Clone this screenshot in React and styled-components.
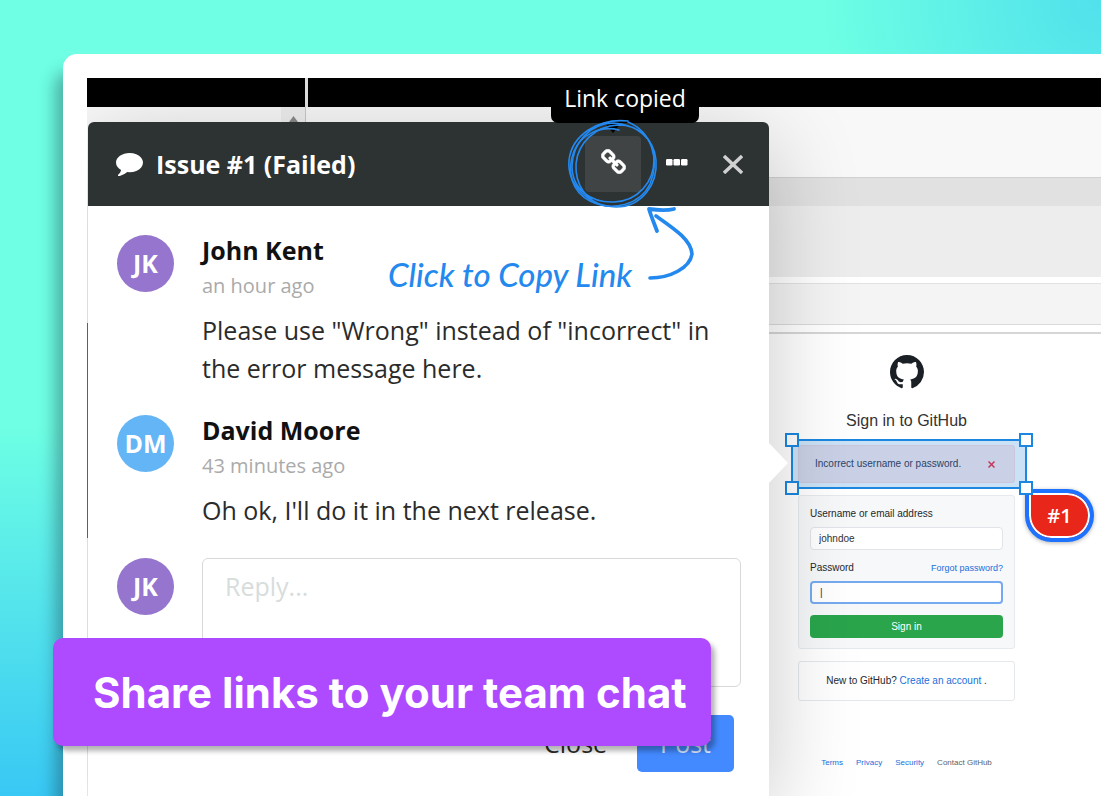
import React from "react";
import styled, { createGlobalStyle } from "styled-components";

const GlobalStyle = createGlobalStyle`
  *, *::before, *::after { box-sizing: border-box; }
  body { margin: 0; font-family: "Open Sans", "Noto Sans", sans-serif; }
  button, input, textarea { font-family: inherit; margin: 0; }
  h1, h2, h3, p { margin: 0; }
`;

const blue = "#2489ee";

const Page = styled.div`
  position: relative;
  display: flex;
  min-height: 100vh;
  padding: 54px 0 0 63px;
  overflow: hidden;
  background:
    radial-gradient(circle at 100% 0, #50e1ec 0, rgba(110, 255, 228, 0) 280px),
    linear-gradient(to top, #38c8f4 0, #6effe4 370px);
`;

const Frame = styled.div`
  flex: 1;
  display: flex;
  min-width: 0;
  padding: 24px 0 0 24px;
  border-radius: 14px 0 0 0;
  background: #fff;
  box-shadow: -8px 18px 16px rgba(20, 50, 60, 0.38);
`;

const Stage = styled.div`
  flex: 1;
  display: grid;
  grid-template-columns: minmax(0, 1fr);
  min-width: 0;
  overflow: hidden;
`;

/* App behind the dialog */

const Backdrop = styled.div`
  grid-area: 1 / 1;
  display: flex;
  flex-direction: column;
  min-width: 0;
`;

const TopBar = styled.div`
  display: flex;
  height: 29px;
  background: #000;
`;

const TopBarCell = styled.div`
  width: 221px;
  border-right: 3px solid #e2e2e2;
`;

const Workspace = styled.div`
  flex: 1;
  display: flex;
`;

const Sidebar = styled.div`
  display: flex;
  justify-content: space-between;
  align-items: flex-start;
  width: 219px;
  border-right: 1px solid #c8c8c8;
  background: #f8f8f8;
`;

const FailStripe = styled.div`
  flex: none;
  width: 2px;
  height: 215px;
  margin-top: 216px;
  background: #f0352b;
`;

const ScrollUp = styled.div`
  display: flex;
  justify-content: center;
  width: 24px;
  height: 24px;
  padding-top: 9px;
  background: #eeeeee;
`;

const Main = styled.div`
  flex: 1;
  min-width: 0;
  background: #fff;
`;

const Band = styled.div`
  height: ${(p) => p.$h}px;
  background: ${(p) => p.$bg};
  border-top: ${(p) => (p.$line ? `1px solid ${p.$line}` : "0")};
`;

const SignIn = styled.div`
  display: flex;
  flex-direction: column;
  align-items: stretch;
  width: 217px;
  margin-left: 492px;
  padding-top: 21px;
  font-family: "Liberation Sans", Arial, sans-serif;
  font-size: 10px;
  line-height: 14px;
  color: #24292e;
`;

const Mark = styled.svg`
  align-self: center;
  width: 34px;
  height: 34px;
  fill: #1b1f26;
`;

const SignInTitle = styled.h2`
  margin: 20px 0 6px;
  font-size: 16px;
  font-weight: 400;
  line-height: 24px;
  text-align: center;
  color: #333;
`;

const Selection = styled.div`
  position: relative;
  margin: 0 -12px 6px -7px;
  padding: 4px 10px 4px 5px;
  border: 2px solid #1b87e0;
  background: #cbe2f6;
`;

const Handle = styled.span`
  position: absolute;
  width: 14px;
  height: 14px;
  border: 2px solid #1b87e0;
  background: #fff;
  ${(p) => p.$v}: -8px;
  ${(p) => p.$h}: -8px;
`;

const Flash = styled.div`
  display: flex;
  align-items: center;
  justify-content: space-between;
  height: 38px;
  padding: 0 19px 0 16px;
  border: 1px solid #c9c6dd;
  border-radius: 3px;
  background: #cad1e6;
  color: #2b4468;
`;

const Pin = styled.div`
  position: absolute;
  top: 48px;
  left: 232px;
  display: flex;
  align-items: center;
  justify-content: center;
  width: 69px;
  height: 53px;
  border: 4px solid #1d72ff;
  border-radius: 4px 27px 27px 27px;
  background: #e8261a;
  box-shadow: inset 0 0 0 2px #fff, 0 1px 4px rgba(0, 0, 0, 0.3);
  font-family: "Open Sans", sans-serif;
  font-size: 20px;
  font-weight: 600;
  color: #fff;
`;

const Form = styled.form`
  display: flex;
  flex-direction: column;
  padding: 11px 11px 10px;
  border: 1px solid #e6eaee;
  border-radius: 3px;
  background: #f6f8fa;
`;

const LabelRow = styled.div`
  display: flex;
  justify-content: space-between;
  align-items: center;
  height: 14px;
  margin-bottom: 6px;
`;

const TextInput = styled.input`
  width: 100%;
  height: 23px;
  margin-bottom: 11px;
  padding: 0 8px;
  border: ${(p) => (p.$focus ? "2px solid #76aaf0" : "1px solid #e1e4e8")};
  border-radius: 4px;
  outline: 0;
  background: #fff;
  font-size: 10px;
  color: #333;
`;

const SubmitButton = styled.button`
  height: 23px;
  padding: 0;
  border: 0;
  border-radius: 4px;
  background: #2aa54c;
  font-size: 10px;
  color: #fff;
`;

const Anchor = styled.a`
  color: #1a6fdc;
  text-decoration: none;
`;

const Small = styled(Anchor)`
  font-size: 9px;
`;

const Join = styled.p`
  margin-top: 12px;
  padding: 12px 0;
  border: 1px solid #e3e8ec;
  border-radius: 3px;
  text-align: center;
`;

const Footer = styled.div`
  display: flex;
  justify-content: center;
  gap: 13px;
  margin-top: 55px;
  font-size: 8px;
`;

const FooterLink = styled(Anchor)`
  color: ${(p) => (p.$muted ? "#5c636a" : "#1a6fdc")};
`;

/* Issue dialog */

const Dialog = styled.section`
  grid-area: 1 / 1;
  position: relative;
  width: 681px;
  margin: 44px 0 0 1px;
  border-radius: 6px 6px 0 0;
  background: #fff;
  box-shadow: 0 20px 90px rgba(0, 0, 0, 0.22);
`;

const Pointer = styled.svg`
  position: absolute;
  top: 320px;
  left: 680px;
  width: 20px;
  height: 42px;
  fill: #fff;
`;

const Header = styled.header`
  display: flex;
  align-items: center;
  gap: 8px;
  height: 84px;
  padding: 0 16px 0 28px;
  border-radius: 6px 6px 0 0;
  background: #2d3232;
  color: #fff;
`;

const Title = styled.h1`
  flex: 1;
  display: flex;
  align-items: center;
  gap: 13px;
  font-size: 25px;
  font-weight: 700;
  line-height: 36px;
`;

const IconButton = styled.button`
  position: relative;
  display: flex;
  align-items: center;
  justify-content: center;
  width: ${(p) => p.$w || 56}px;
  height: 56px;
  padding: 0 0 ${(p) => p.$lift || 0}px;
  border: 0;
  border-radius: 4px;
  background: ${(p) => (p.$active ? "#404444" : "transparent")};
  color: #fff;
`;

const Tooltip = styled.span`
  position: absolute;
  bottom: 69px;
  left: -34px;
  width: 148px;
  padding: 3px 0 9px;
  border-radius: 0 0 7px 7px;
  background: #000;
  font-size: 23px;
  line-height: 32px;
  text-align: center;
  white-space: nowrap;
  color: #fff;

  &::after {
    content: "";
    position: absolute;
    top: 100%;
    left: 54px;
    border: 8px solid transparent;
    border-top: 10px solid #000;
    border-bottom: 0;
  }
`;

const Body = styled.div`
  display: flex;
  flex-direction: column;
  padding: 26px 28px 24px 29px;
`;

const Comment = styled.article`
  display: flex;
  align-items: flex-start;
  gap: 28px;
  margin-bottom: 25px;
`;

const Avatar = styled.div`
  flex: none;
  width: 57px;
  height: 57px;
  margin-top: ${(p) => (p.$flush ? 0 : 3)}px;
  border-radius: 50%;
  background: ${(p) => p.$color};
  font-size: 25px;
  font-weight: 700;
  line-height: 57px;
  text-align: center;
  color: #fff;
`;

const Name = styled.h3`
  font-size: 25px;
  font-weight: 700;
  line-height: 36px;
  color: #111;
`;

const Time = styled.p`
  margin-bottom: 7px;
  font-size: 20px;
  line-height: 36px;
  color: #aaa;
`;

const Message = styled.p`
  font-size: 25px;
  line-height: 38px;
  color: #2b2b2b;
`;

const ReplyRow = styled.div`
  display: flex;
  align-items: flex-start;
  gap: 28px;
  margin-top: 4px;
`;

const Reply = styled.textarea`
  flex: 1;
  height: 129px;
  padding: 9px 22px;
  border: 1px solid #d9d9d9;
  border-radius: 6px;
  outline: 0;
  background: #fff;
  resize: none;
  font-size: 25px;
  line-height: 36px;

  &::placeholder { color: #d7dddb; opacity: 1; }
`;

const Actions = styled.div`
  display: flex;
  justify-content: flex-end;
  margin: 28px 7px 0 0;
`;

const ActionButton = styled.button`
  height: 57px;
  padding: 0 ${(p) => (p.$primary ? 23 : 30)}px;
  border: 0;
  border-radius: 5px;
  background: ${(p) => (p.$primary ? "#4389ff" : "transparent")};
  font-size: 25px;
  line-height: 57px;
  color: ${(p) => (p.$primary ? "#dbe8ff" : "#2b2b2b")};
`;

/* Hand-drawn note */

const Scribble = styled.svg`
  position: absolute;
  top: -6px;
  left: 476px;
  width: 136px;
  height: 172px;
  overflow: visible;
  fill: none;
  stroke: ${blue};
  stroke-linecap: round;
  stroke-linejoin: round;
  pointer-events: none;
`;

const Note = styled.p`
  position: absolute;
  top: 132px;
  left: 300px;
  font-family: Lato, sans-serif;
  font-size: 33px;
  font-style: italic;
  font-weight: 500;
  line-height: 40px;
  white-space: nowrap;
  color: ${blue};
`;

const Banner = styled.div`
  position: absolute;
  bottom: 50px;
  left: 53px;
  padding: 27px 24px 25px 40px;
  border-radius: 10px;
  background: #ae4aff;
  box-shadow: 4px 5px 5px rgba(0, 0, 0, 0.3);
  font-family: Inter, sans-serif;
  font-size: 42px;
  font-weight: 700;
  line-height: 56px;
  white-space: nowrap;
  color: #fff;
`;

const CommentIcon = () => (
  <svg width="27" height="27" viewBox="0 128 1792 1792" fill="#fff" aria-hidden="true">
    <path d="M1792 896q0 174-120 321.5t-326 233-450 85.5q-70 0-145-8-198 175-460 242-49 14-114 22-17 2-30.5-9t-17.5-29v-1q-3-4-.5-12t2-10 4.5-9.5l6-9 7-8.5 8-9q7-8 31-34.5t34.5-38 31-39.5 32.5-51 27-59 26-76q-157-89-247.5-220t-90.5-281q0-130 71-248.5t191-204.5 286-136.5 348-50.5q244 0 450 85.5t326 233 120 321.5z" />
  </svg>
);

const ChainIcon = () => (
  <svg width="25" height="25" viewBox="0 0 1664 1664" fill="#fff" stroke="#fff" strokeWidth="40" aria-hidden="true">
    <path d="M1456 1216q0-40-28-68l-208-208q-28-28-68-28-42 0-72 32 3 3 19 18.5t21.5 21.5 15 19 13 25.5 3.5 27.5q0 40-28 68t-68 28q-15 0-27.5-3.5t-25.5-13-19-15-21.5-21.5-18.5-19q-33 31-33 73 0 40 28 68l206 207q27 27 68 27 40 0 68-26l147-146q28-28 28-67zm-703-705q0-40-28-68l-206-207q-28-28-68-28-39 0-68 27l-147 146q-28 28-28 67 0 40 28 68l208 208q27 27 68 27 42 0 72-31-3-3-19-18.5t-21.5-21.5-15-19-13-25.5-3.5-27.5q0-40 28-68t68-28q15 0 27.5 3.5t25.5 13 19 15 21.5 21.5 18.5 19q33-31 33-73zm895 705q0 120-85 203l-147 146q-83 83-203 83-121 0-204-85l-206-207q-83-83-83-203 0-123 88-209l-88-88q-86 88-208 88-120 0-204-84l-208-208q-84-84-84-204t85-203l147-146q83-83 203-83 121 0 204 85l206 207q83 83 83 203 0 123-88 209l88 88q86-88 208-88 120 0 204 84l208 208q84 84 84 204z" />
  </svg>
);

const comments = [
  {
    initials: "JK",
    color: "#9575cd",
    name: "John Kent",
    time: "an hour ago",
    text: 'Please use "Wrong" instead of "incorrect" in the error message here.',
  },
  {
    initials: "DM",
    color: "#64b5f6",
    name: "David Moore",
    time: "43 minutes ago",
    text: "Oh ok, I'll do it in the next release.",
  },
];

function GitHubSignIn() {
  return (
    <SignIn>
      <Mark viewBox="0 0 16 16" aria-label="GitHub">
        <path d="M8 0C3.58 0 0 3.58 0 8c0 3.54 2.29 6.53 5.47 7.59.4.07.55-.17.55-.38 0-.19-.01-.82-.01-1.49-2.01.37-2.53-.49-2.69-.94-.09-.23-.48-.94-.82-1.13-.28-.15-.68-.52-.01-.53.63-.01 1.08.58 1.23.82.72 1.21 1.87.87 2.33.66.07-.52.28-.87.51-1.07-1.78-.2-3.64-.89-3.64-3.95 0-.87.31-1.59.82-2.15-.08-.2-.36-1.02.08-2.12 0 0 .67-.21 2.2.82.64-.18 1.32-.27 2-.27.68 0 1.36.09 2 .27 1.53-1.04 2.2-.82 2.2-.82.44 1.1.16 1.92.08 2.12.51.56.82 1.27.82 2.15 0 3.07-1.87 3.75-3.65 3.95.29.25.54.73.54 1.48 0 1.07-.01 1.93-.01 2.2 0 .21.15.46.55.38A8.013 8.013 0 0016 8c0-4.42-3.58-8-8-8z" />
      </Mark>
      <SignInTitle>Sign in to GitHub</SignInTitle>
      <Selection>
        <Flash>
          <span>Incorrect username or password.</span>
          <svg width="7" height="7" viewBox="0 0 7 7" stroke="#c0395c" strokeWidth="1.5" aria-hidden="true">
            <path d="M.5.5l6 6M6.5.5l-6 6" />
          </svg>
        </Flash>
        <Pin>#1</Pin>
        <Handle $v="top" $h="left" />
        <Handle $v="top" $h="right" />
        <Handle $v="bottom" $h="left" />
        <Handle $v="bottom" $h="right" />
      </Selection>
      <Form onSubmit={(e) => e.preventDefault()}>
        <LabelRow>
          <label htmlFor="login">Username or email address</label>
        </LabelRow>
        <TextInput id="login" type="text" defaultValue="johndoe" />
        <LabelRow>
          <label htmlFor="password">Password</label>
          <Small href="#forgot">Forgot password?</Small>
        </LabelRow>
        <TextInput id="password" type="text" defaultValue="|" $focus />
        <SubmitButton type="submit">Sign in</SubmitButton>
      </Form>
      <Join>
        New to GitHub? <Anchor href="#join">Create an account</Anchor> .
      </Join>
      <Footer>
        <FooterLink href="#terms">Terms</FooterLink>
        <FooterLink href="#privacy">Privacy</FooterLink>
        <FooterLink href="#security">Security</FooterLink>
        <FooterLink href="#contact" $muted>Contact GitHub</FooterLink>
      </Footer>
    </SignIn>
  );
}

function IssueDialog() {
  return (
    <Dialog>
      <Pointer viewBox="0 0 20 42" aria-hidden="true">
        <path d="M0 0l20 21L0 42z" />
      </Pointer>
      <Header>
        <Title>
          <CommentIcon />
          Issue #1 (Failed)
        </Title>
        <IconButton type="button" aria-label="Copy link" $active $lift={6}>
          <ChainIcon />
          <Tooltip role="tooltip">Link copied</Tooltip>
        </IconButton>
        <IconButton type="button" aria-label="More" $lift={4}>
          <svg width="22" height="8" viewBox="0 0 22 8" fill="#fff" aria-hidden="true">
            <rect x="0" y="1" width="6.5" height="6.5" rx="1.2" />
            <rect x="7.5" y="1" width="6.5" height="6.5" rx="1.2" />
            <rect x="15" y="1" width="6.5" height="6.5" rx="1.2" />
          </svg>
        </IconButton>
        <IconButton type="button" aria-label="Close dialog" $w={40}>
          <svg width="20" height="20" viewBox="0 0 20 20" stroke="#d0d2d2" strokeWidth="3.4" aria-hidden="true">
            <path d="M1 2l18 17M19 2L1 19" />
          </svg>
        </IconButton>
      </Header>
      <Body>
        {comments.map((c) => (
          <Comment key={c.name}>
            <Avatar $color={c.color}>{c.initials}</Avatar>
            <div>
              <Name>{c.name}</Name>
              <Time>{c.time}</Time>
              <Message>{c.text}</Message>
            </div>
          </Comment>
        ))}
        <ReplyRow>
          <Avatar $color="#9575cd" $flush>JK</Avatar>
          <Reply placeholder="Reply..." aria-label="Reply" />
        </ReplyRow>
        <Actions>
          <ActionButton type="button">Close</ActionButton>
          <ActionButton type="button" $primary>Post</ActionButton>
        </Actions>
      </Body>
      <Note>Click to Copy Link</Note>
      <Scribble viewBox="564 116 136 172" aria-hidden="true">
        <g strokeWidth="1.6">
          <path d="M619 130C600 125 581 135 574 151C566 172 572 192 590 201C612 212 640 205 650 184C660 160 652 132 628 122" />
          <path d="M628 121C598 118 572 135 569 160C567 185 588 206 616 207C642 207 658 184 656 160C654 138 636 124 613 123C590 124 573 142 572 166C572 190 592 203 614 202C638 201 654 182 654 160C655 140 640 125 618 125C596 126 578 142 576 164C575 184 586 202 606 206" />
        </g>
        <path d="M650 278C670 278 690 268 692 254C691 240 676 230 656 216" strokeWidth="3.6" />
        <path d="M674 209C666 211 656 210 649 209C651 216 654 223 657 231" strokeWidth="3.8" />
      </Scribble>
    </Dialog>
  );
}

export default function App() {
  return (
    <Page>
      <GlobalStyle />
      <Frame>
        <Stage>
          <Backdrop>
            <TopBar>
              <TopBarCell />
            </TopBar>
            <Workspace>
              <Sidebar>
                <FailStripe />
                <ScrollUp>
                  <svg width="9" height="6" viewBox="0 0 9 6" fill="#8a8a8a" aria-hidden="true">
                    <path d="M4.500 0L9 6H0z" />
                  </svg>
                </ScrollUp>
              </Sidebar>
              <Main>
                <Band $h={70} $bg="#f8f8f8" />
                <Band $h={29} $bg="#e1e1e1" $line="#d0d0d0" />
                <Band $h={71} $bg="#ededed" />
                <Band $h={6} $bg="#fff" />
                <Band $h={41} $bg="#f4f4f4" $line="#e2e2e2" />
                <Band $h={8} $bg="#fff" $line="#dadada" />
                <Band $h={2} $bg="#d6d6d6" />
                <GitHubSignIn />
              </Main>
            </Workspace>
          </Backdrop>
          <IssueDialog />
        </Stage>
      </Frame>
      <Banner>Share links to your team chat</Banner>
    </Page>
  );
}
